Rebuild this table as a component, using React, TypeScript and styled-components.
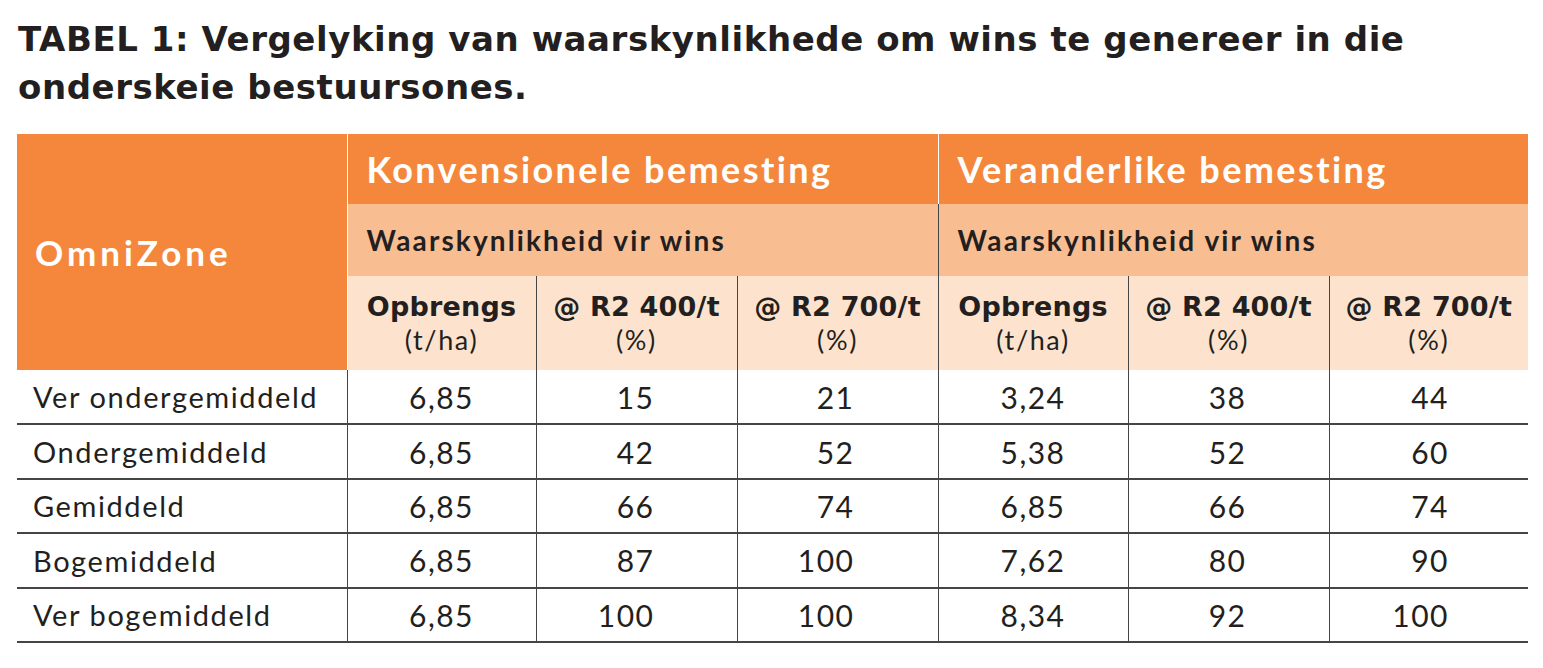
import React from "react";
import styled, { createGlobalStyle } from "styled-components";

const GlobalStyle = createGlobalStyle`
  html, body { margin: 0; padding: 0; background: #ffffff; }
  body { font-family: "Lato", "Open Sans", sans-serif; color: #231f20; }
`;

const ORANGE = "#f4873c";
const LIGHT = "#f9bd92";
const PALE = "#fde3cd";
const LINE = "#454545";
const HEAVY = `"DejaVu Sans", "Lato", sans-serif`;

const Page = styled.div`
  width: 1543px;
  height: 668px;
  padding: 15px 0 0 18px;
  box-sizing: border-box;
  display: flex;
  flex-direction: column;
`;

const Title = styled.h1`
  margin: 0;
  font-family: ${HEAVY};
  font-weight: 700;
  font-size: 34px;
  line-height: 48px;
  letter-spacing: 0.55px;
  color: #231f20;
  white-space: nowrap;
`;

const Table = styled.table`
  margin: 23px 0 0 -1px;
  width: 1511px;
  border-collapse: collapse;
  table-layout: fixed;
`;

const HeadRow = styled.tr<{ $h: number }>`
  height: ${(p) => p.$h}px;
`;

const CornerCell = styled.th`
  background: ${ORANGE};
  color: #ffffff;
  text-align: left;
  padding: 0 0 0 18px;
  font-size: 35px;
  font-weight: 700;
  letter-spacing: 4px;
  border-right: 1px solid #ffffff;
`;

const GroupCell = styled.th<{ $last?: boolean }>`
  background: ${ORANGE};
  color: #ffffff;
  text-align: left;
  padding: 0 0 0 19px;
  font-size: 36px;
  font-weight: 700;
  letter-spacing: 2.4px;
  border-right: ${(p) => (p.$last ? "none" : "1px solid #ffffff")};
`;

const ProbCell = styled.th<{ $last?: boolean }>`
  background: ${LIGHT};
  color: #231f20;
  text-align: left;
  padding: 0 0 0 19px;
  font-size: 28px;
  font-weight: 700;
  letter-spacing: 2.1px;
  border-right: ${(p) => (p.$last ? "none" : `1.5px solid ${LINE}`)};
`;

const SubCell = styled.th<{ $last?: boolean }>`
  background: ${PALE};
  color: #231f20;
  text-align: center;
  vertical-align: middle;
  padding: 0;
  border-right: ${(p) => (p.$last ? "none" : `1.5px solid ${LINE}`)};
`;

const SubMain = styled.div`
  font-family: ${HEAVY};
  font-size: 27px;
  font-weight: 700;
  letter-spacing: 0.2px;
  line-height: 34px;
`;

const SubUnit = styled.div`
  font-size: 27px;
  font-weight: 400;
  letter-spacing: 1.6px;
  line-height: 32px;
`;

const DataRow = styled.tr`
  height: 54.4px;
  border-bottom: 2px solid ${LINE};
`;

const LabelCell = styled.td`
  padding: 0 0 0 16px;
  font-size: 29px;
  font-weight: 400;
  letter-spacing: 1.6px;
  border-right: 1.5px solid ${LINE};
`;

const ValueCell = styled.td<{ $pad: number; $align: "center" | "right"; $last?: boolean }>`
  text-align: ${(p) => p.$align};
  padding: 0 ${(p) => (p.$align === "right" ? p.$pad : 0)}px 0 0;
  font-size: 30px;
  font-weight: 400;
  letter-spacing: 1.5px;
  border-right: ${(p) => (p.$last ? "none" : `1.5px solid ${LINE}`)};
`;

const cols = [330, 189, 201, 201, 190, 201, 199];

const subHeads = [
  { main: "Opbrengs", unit: "(t/ha)" },
  { main: "@ R2 400/t", unit: "(%)" },
  { main: "@ R2 700/t", unit: "(%)" },
  { main: "Opbrengs", unit: "(t/ha)" },
  { main: "@ R2 400/t", unit: "(%)" },
  { main: "@ R2 700/t", unit: "(%)" },
];

const rows: [string, string[]][] = [
  ["Ver ondergemiddeld", ["6,85", "15", "21", "3,24", "38", "44"]],
  ["Ondergemiddeld", ["6,85", "42", "52", "5,38", "52", "60"]],
  ["Gemiddeld", ["6,85", "66", "74", "6,85", "66", "74"]],
  ["Bogemiddeld", ["6,85", "87", "100", "7,62", "80", "90"]],
  ["Ver bogemiddeld", ["6,85", "100", "100", "8,34", "92", "100"]],
];

const colSetup: { align: "center" | "right"; pad: number }[] = [
  { align: "center", pad: 0 },
  { align: "right", pad: 82 },
  { align: "right", pad: 83 },
  { align: "center", pad: 0 },
  { align: "right", pad: 82 },
  { align: "right", pad: 79 },
];

export default function App() {
  return (
    <>
      <GlobalStyle />
      <Page>
        <Title>
          TABEL 1: Vergelyking van waarskynlikhede om wins te genereer in die
          <br />
          onderskeie bestuursones.
        </Title>
        <Table>
          <colgroup>
            {cols.map((w, i) => (
              <col key={i} style={{ width: w }} />
            ))}
          </colgroup>
          <thead>
            <HeadRow $h={70}>
              <CornerCell rowSpan={3}>OmniZone</CornerCell>
              <GroupCell colSpan={3}>Konvensionele bemesting</GroupCell>
              <GroupCell colSpan={3} $last>
                Veranderlike bemesting
              </GroupCell>
            </HeadRow>
            <HeadRow $h={72}>
              <ProbCell colSpan={3}>Waarskynlikheid vir wins</ProbCell>
              <ProbCell colSpan={3} $last>
                Waarskynlikheid vir wins
              </ProbCell>
            </HeadRow>
            <HeadRow $h={94}>
              {subHeads.map((s, i) => (
                <SubCell key={i} $last={i === subHeads.length - 1}>
                  <SubMain>{s.main}</SubMain>
                  <SubUnit>{s.unit}</SubUnit>
                </SubCell>
              ))}
            </HeadRow>
          </thead>
          <tbody>
            {rows.map(([label, vals]) => (
              <DataRow key={label}>
                <LabelCell>{label}</LabelCell>
                {vals.map((v, i) => (
                  <ValueCell
                    key={i}
                    $align={colSetup[i].align}
                    $pad={colSetup[i].pad}
                    $last={i === vals.length - 1}
                  >
                    {v}
                  </ValueCell>
                ))}
              </DataRow>
            ))}
          </tbody>
        </Table>
      </Page>
    </>
  );
}
